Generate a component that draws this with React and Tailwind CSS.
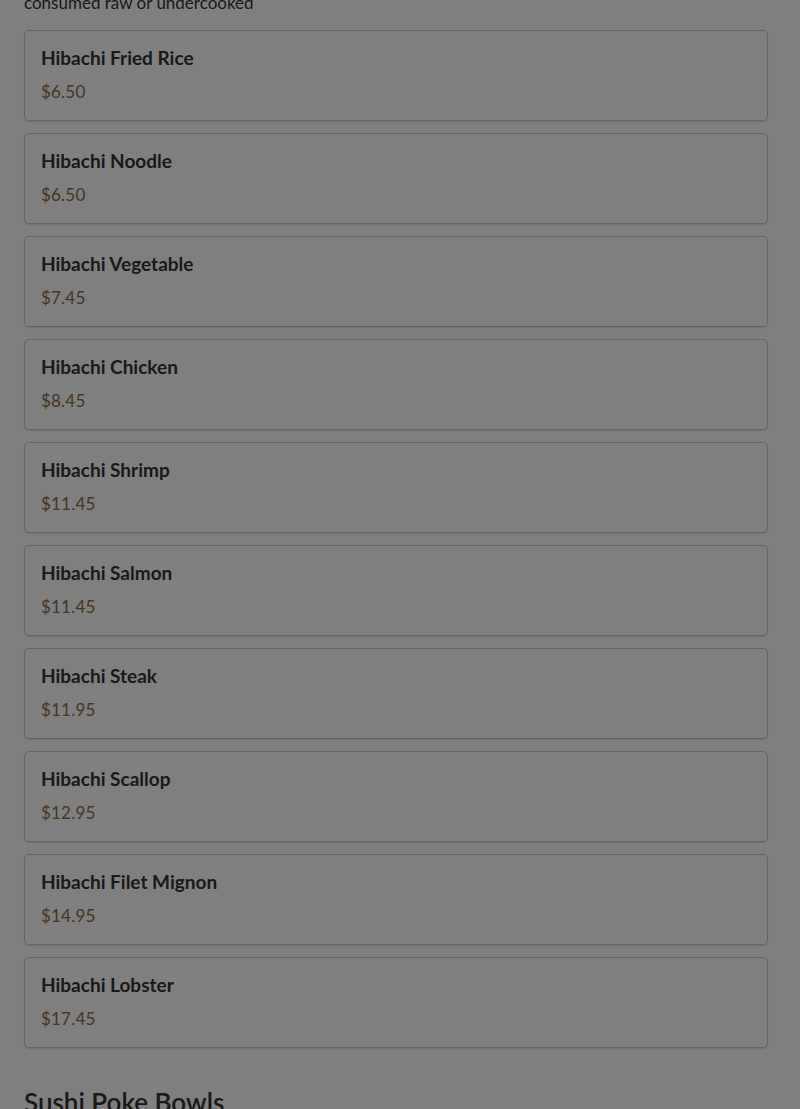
import React from 'react';

const ITEMS = [
  { name: 'Hibachi Fried Rice', price: '$6.50' },
  { name: 'Hibachi Noodle', price: '$6.50' },
  { name: 'Hibachi Vegetable', price: '$7.45' },
  { name: 'Hibachi Chicken', price: '$8.45' },
  { name: 'Hibachi Shrimp', price: '$11.45' },
  { name: 'Hibachi Salmon', price: '$11.45' },
  { name: 'Hibachi Steak', price: '$11.95' },
  { name: 'Hibachi Scallop', price: '$12.95' },
  { name: 'Hibachi Filet Mignon', price: '$14.95' },
  { name: 'Hibachi Lobster', price: '$17.45' },
];

function MenuCard({ name, price }) {
  return (
    <div className="h-[91px] border border-[#c8c8c8] rounded-[5px] bg-white shadow-[0_1px_2px_rgba(0,0,0,0.12)] px-4 pt-[14px]">
      <p className="text-[19px] leading-[26px] font-bold text-[#333]">{name}</p>
      <p className="mt-[10px] text-[17px] leading-[22px] text-[#8c6a44] tracking-[0.2px]">{price}</p>
    </div>
  );
}

export default function App() {
  return (
    <div className="relative h-[1109px] overflow-hidden bg-white" style={{ fontFamily: 'Lato, "Noto Sans", sans-serif' }}>
      <div className="pl-6 pr-8 -mt-[8px]">
        <p className="text-[17px] leading-[22px] text-[#333]">consumed raw or undercooked</p>
        <div className="mt-[16px] flex flex-col gap-3">
          {ITEMS.map(item => <MenuCard key={item.name} {...item} />)}
        </div>
        <h2 className="mt-[37px] text-[26px] leading-[34px] font-semibold text-[#333]">Sushi Poke Bowls</h2>
      </div>
      {/* modal backdrop */}
      <div className="fixed inset-0 bg-black/50" />
    </div>
  );
}
